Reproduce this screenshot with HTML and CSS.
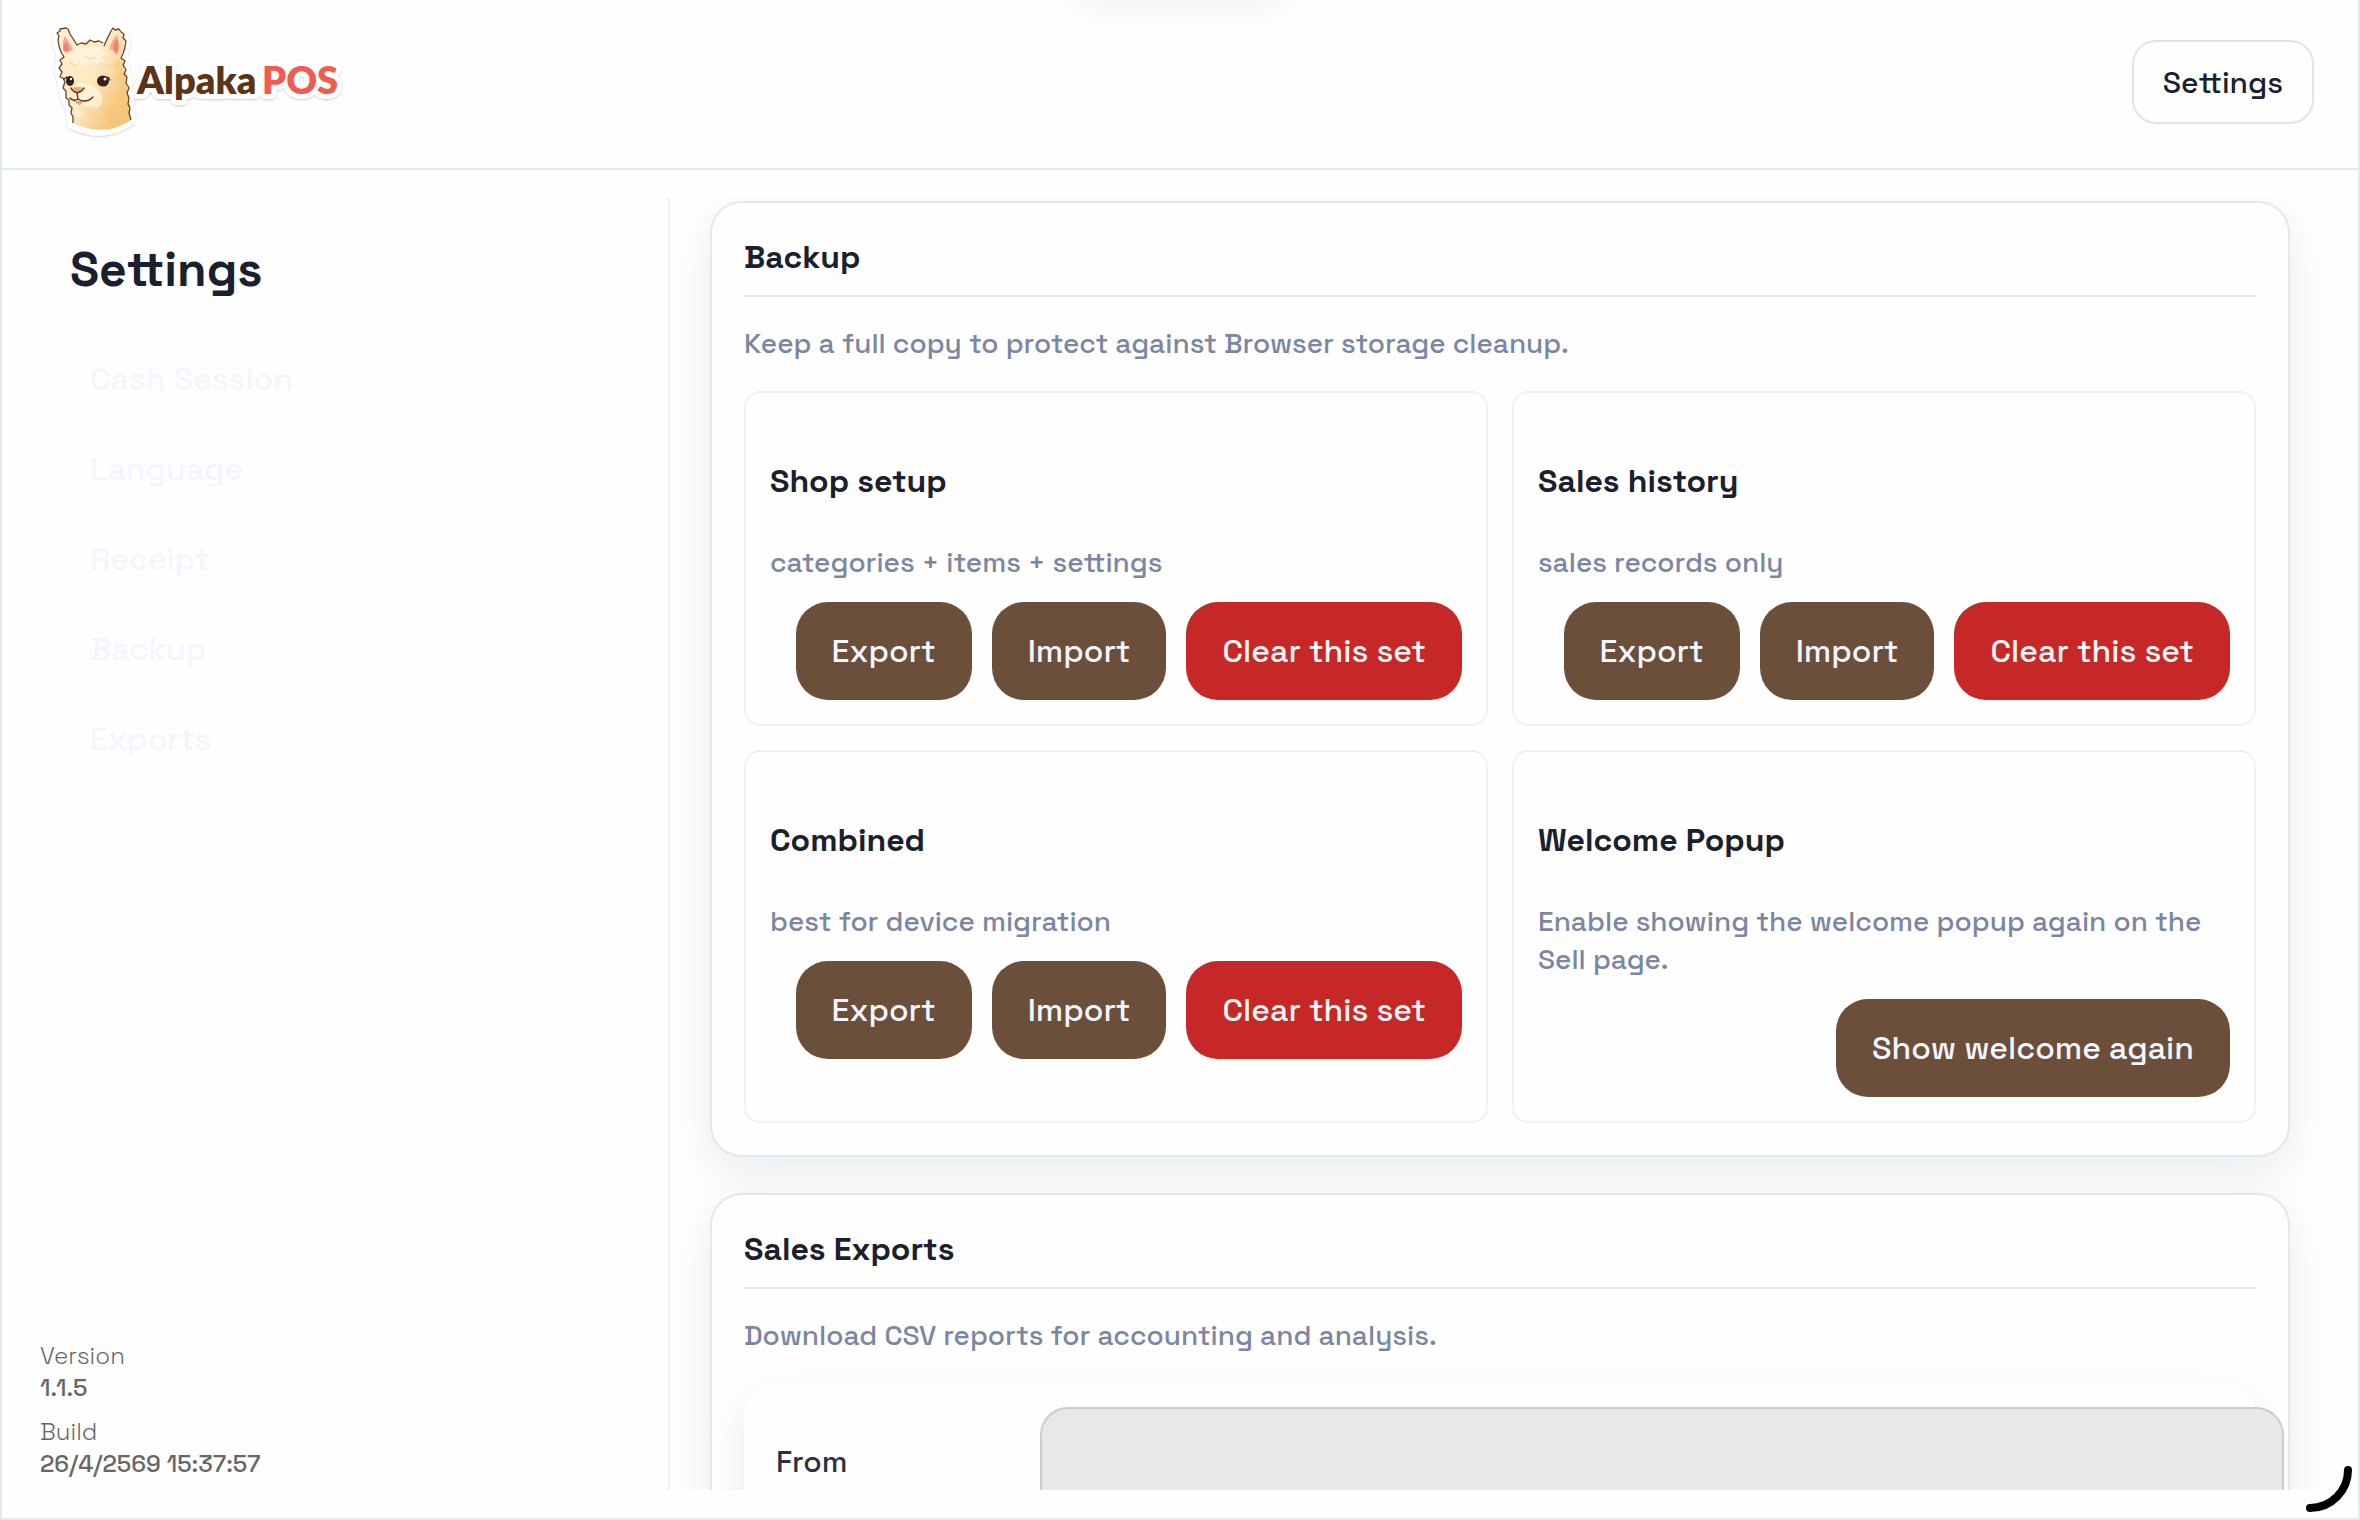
FILE: index.html
```html
<!DOCTYPE html>
<html lang="en">
<head>
  <meta charset="utf-8">
  <meta name="viewport" content="width=device-width, initial-scale=1">
  <title>Alpaka POS - Settings</title>
  <link rel="stylesheet" href="styles.css">
</head>
<body>
  <div class="app">
    <header class="topbar">
      <svg class="logo" viewBox="46 22 300 120" role="img" aria-label="Alpaka POS">
        <defs>
          <linearGradient id="fur" x1="0" y1="0" x2="1" y2="0.7">
            <stop offset="0" stop-color="#fff1d4"/>
            <stop offset="0.55" stop-color="#fde8c0"/>
            <stop offset="1" stop-color="#f3bd6c"/>
          </linearGradient>
          <filter id="sticker" x="-10%" y="-10%" width="120%" height="125%">
            <feDropShadow dx="0" dy="1" stdDeviation="1" flood-color="#000" flood-opacity="0.2"/>
          </filter>
        </defs>

        <!-- white sticker edge -->
        <g filter="url(#sticker)">
          <path fill="#fff" stroke="#fff" stroke-width="11" stroke-linejoin="round" d="M73 122 L71 108 L66 97 L63 82 L60 70 L62 56 L58 42 L59 31 L66 28 L71 34 L77 44 L90 40 L104 43 L109 32 L114 28 L123 32 L125 42 L122 56 L125 74 L128 94 L130 120 Q104 138 73 124 Z"/>
          <text class="logo-text logo-edge" x="137" y="94">Alpaka</text>
          <text class="logo-text logo-edge" x="262" y="94">POS</text>
        </g>

        <!-- head -->
        <path fill="url(#fur)" d="M73 123 L73 117 L71 111 L70 104 L66 98 L65 91 L63 86 L63 78 L60 73 L61 66 L60 61 L63 56 L60 50 L58 43 L59 37 L57 33 L60 29 L67 28 L70 34 L75 42 L80 45 L88 41 L96 41 L104 43 L109 34 L112 29 L119 29 L121 33 L125 36 L124 46 L122 54 L121 58 L125 63 L124 69 L127 76 L126 84 L128 90 L128 98 L130 106 L129 112 L131 120 Q104 138 73 123 Z"/>
        <path fill="#f6c980" opacity="0.6" d="M118 60 L124 76 L127 92 L129 112 L130 120 Q118 129 106 130 L112 122 L104 119 L112 113 L100 112 Q112 104 116 92 L121 84 L115 78 L120 70 L113 67 Z"/>
        <path fill="#fff6e4" opacity="0.7" d="M68 56 L78 48 L98 46 L108 54 L99 57 L106 62 L96 64 L90 62 L82 66 L74 64 Z M76 84 Q92 80 100 92 Q106 100 98 108 L84 106 L74 108 L84 114 L76 118 Q72 96 76 84 Z"/>
        <path fill="none" stroke="#f7d396" stroke-width="1" d="M69 62 l6 4 l5 -3 M84 56 l7 3 l5 -2 M100 62 l6 4 l7 -2 M107 96 l5 -2 l3 2 M106 104 l6 -2 l3 3 M88 115 l6 -2 l5 3 M96 123 l6 -2 l6 2 M112 88 l5 -2 l4 2"/>
        <path fill="none" stroke="#6b4426" stroke-width="1.3" stroke-linejoin="round" d="M73 123 L73 117 L71 113 L72 108 L69 105 L69 100 L66 98 L66 91 L63 88 L65 82 L63 78 L60 77 L62 72 L59 68 L62 64 L60 60 L64 57 L61 52 L59 46 L58 40 L59 36 L57 33 L60 31 L60 29 L66 28 L68 29 L70 34 L77 45 L81 43 L86 44 L90 40 L94 42 L99 41 L103 43 M104 46 L108 37 L111 31 L113 28 L115 30 L119 29 L121 32 L124 34 L123 38 L126 41 L125 47 L123 54 L121 58 L125 61 L123 65 L126 70 L124 74 L127 77 L126 83 L129 88 L127 93 L129 98 L128 104 L130 108 L129 113 L131 120"/>
        <path fill="#f7a693" d="M65 36 Q70 43 73 50 L69 51 L68 53 L64 52 Q61 44 65 36 Z M117 35 Q110 42 110 49 L114 51 L117 55 Q121 45 117 35 Z"/>
        <path fill="#ee8277" d="M66 42 Q69 45 69 51 L64 51 Q62 46 66 42 Z M117 39 Q112 44 114 51 L117 54 Q120 46 117 39 Z"/>

        <!-- face -->
        <ellipse cx="70" cy="81" rx="4" ry="5" fill="#33211c"/>
        <ellipse cx="103" cy="81" rx="6" ry="5.5" fill="#33211c"/>
        <circle cx="71" cy="79" r="1.2" fill="#fff"/>
        <circle cx="105" cy="79" r="1.5" fill="#fff"/>
        <path fill="none" stroke="#33211c" stroke-width="1.2" stroke-linecap="round" d="M64 79 L67 77 M108 77 L110 80"/>
        <path fill="#efa862" d="M72 88 Q78 86 84 88 L80 93 L76 93 Z M74 101 L84 101 L80 105 Q77 105 74 101 Z"/>
        <path fill="none" stroke="#5a3420" stroke-width="1.4" stroke-linecap="round" d="M71 88 Q72 91 77 93 L78 99 M77 93 Q83 91 84 88 M70 98 Q74 102 78 99 Q86 104 93 97"/>

        <text class="logo-text logo-name" x="137" y="94">Alpaka</text>
        <text class="logo-text logo-pos" x="262" y="94">POS</text>
      </svg>
      <button class="btn-outline" type="button">Settings</button>
    </header>

    <div class="layout">
      <aside class="sidebar">
        <h1 class="sidebar-title">Settings</h1>
        <nav class="sidebar-nav">
          <a href="#cash-session">Cash Session</a>
          <a href="#language">Language</a>
          <a href="#receipt">Receipt</a>
          <a href="#backup">Backup</a>
          <a href="#exports">Exports</a>
        </nav>
        <dl class="build-info">
          <div>
            <dt>Version</dt>
            <dd>1.1.5</dd>
          </div>
          <div>
            <dt>Build</dt>
            <dd>26/4/2569 15:37:57</dd>
          </div>
        </dl>
      </aside>

      <main class="content">
        <section class="panel" id="backup">
          <h2 class="panel-title">Backup</h2>
          <p class="muted">Keep a full copy to protect against Browser storage cleanup.</p>
          <div class="backup-grid">
            <article class="backup-card">
              <h3>Shop setup</h3>
              <p class="muted">categories + items + settings</p>
              <div class="actions">
                <button class="btn" type="button">Export</button>
                <button class="btn" type="button">Import</button>
                <button class="btn btn-danger" type="button">Clear this set</button>
              </div>
            </article>
            <article class="backup-card">
              <h3>Sales history</h3>
              <p class="muted">sales records only</p>
              <div class="actions">
                <button class="btn" type="button">Export</button>
                <button class="btn" type="button">Import</button>
                <button class="btn btn-danger" type="button">Clear this set</button>
              </div>
            </article>
            <article class="backup-card">
              <h3>Combined</h3>
              <p class="muted">best for device migration</p>
              <div class="actions">
                <button class="btn" type="button">Export</button>
                <button class="btn" type="button">Import</button>
                <button class="btn btn-danger" type="button">Clear this set</button>
              </div>
            </article>
            <article class="backup-card">
              <h3>Welcome Popup</h3>
              <p class="muted">Enable showing the welcome popup again on the Sell page.</p>
              <div class="actions">
                <button class="btn" type="button">Show welcome again</button>
              </div>
            </article>
          </div>
        </section>

        <section class="panel" id="exports">
          <h2 class="panel-title">Sales Exports</h2>
          <p class="muted">Download CSV reports for accounting and analysis.</p>
          <form class="export-form">
            <div class="field">
              <label for="export-from">From</label>
              <div class="field-control">
                <input id="export-from" type="text">
              </div>
            </div>
          </form>
        </section>
      </main>
    </div>
  </div>

  <!-- toast waits above the window, only its shadow shows -->
  <div class="toast" aria-hidden="true"></div>

  <svg class="corner-arc" viewBox="0 0 50 50" aria-hidden="true">
    <path d="M42 4 A38 38 0 0 1 4 42"/>
  </svg>
</body>
</html>
```

FILE: styles.css
```css
:root {
  --bg: #fefefe;
  --line: #e2e8f2;
  --line-soft: #f1f1f3;
  --text: #1a202e;
  --muted: #7b86a3;
  --brown: #6b4f3a;
  --red: #c62828;
}

* {
  margin: 0;
  padding: 0;
  box-sizing: border-box;
}

body {
  background: var(--bg);
  color: var(--text);
  font-family: "Space Grotesk", Inter, sans-serif;
  font-size: 28px;
  overflow: hidden;
}

button,
input {
  font: inherit;
}

.app {
  height: 100vh;
  display: flex;
  flex-direction: column;
  border: 2px solid var(--line);
  border-top: 0;
}

/* Top bar */
.topbar {
  display: flex;
  align-items: center;
  justify-content: space-between;
  padding: 22px 44px 26px;
  border-bottom: 2px solid var(--line);
}

.logo {
  display: block;
  width: 300px;
  height: 120px;
}

.logo-text {
  font-family: Lato, sans-serif;
  font-size: 38px;
  font-weight: 800;
}

.logo-edge {
  fill: #fff;
  stroke: #fff;
  stroke-width: 10px;
  stroke-linejoin: round;
}

.logo-name {
  fill: #5c3519;
}

.logo-pos {
  fill: #f15b50;
}

.btn-outline {
  height: 84px;
  padding: 0 29px;
  background: var(--bg);
  border: 2px solid #e4e4e4;
  border-radius: 24px;
  color: var(--text);
  font-size: 30px;
  font-weight: 500;
}

/* Layout */
.layout {
  flex: 1;
  min-height: 0;
  display: flex;
  padding: 28px;
}

.sidebar {
  width: 640px;
  flex-shrink: 0;
  display: flex;
  flex-direction: column;
  padding: 40px 10px 10px;
  border-right: 2px solid #eef0f3;
}

.sidebar-title {
  padding: 0 30px;
  font-size: 48px;
  line-height: 64px;
  font-weight: 700;
}

.sidebar-nav {
  display: flex;
  flex-direction: column;
  padding: 32px 50px;
}

.sidebar-nav a {
  color: #f4f6ff;
  font-size: 32px;
  font-weight: 500;
  line-height: 90px;
  text-decoration: none;
}

.build-info {
  display: flex;
  flex-direction: column;
  gap: 12px;
  margin-top: auto;
  color: #666;
  font-size: 24px;
  line-height: 32px;
}

.build-info dt {
  font-weight: 300;
}

.build-info dd {
  font-weight: 500;
}

.content {
  flex: 1;
  min-width: 0;
  overflow: hidden;
  padding: 3px 40px;
}

/* Panels */
.panel {
  margin-bottom: 36px;
  padding: 32px;
  background: var(--bg);
  border: 2px solid var(--line);
  border-radius: 32px;
  box-shadow: 0 16px 48px rgba(15, 23, 42, 0.08);
}

.panel-title {
  padding-bottom: 16px;
  border-bottom: 2px solid var(--line);
  font-size: 32px;
  line-height: 44px;
  font-weight: 600;
}

.muted {
  color: var(--muted);
  font-size: 28px;
  line-height: 38px;
  font-weight: 500;
}

.panel > .muted {
  margin: 27px 0 29px;
}

.backup-grid {
  display: grid;
  grid-template-columns: 1fr 1fr;
  gap: 24px;
}

.backup-card {
  padding: 24px;
  border: 2px solid var(--line-soft);
  border-radius: 16px;
}

.backup-card h3 {
  margin: 43px 0 41px;
  font-size: 32px;
  line-height: 42px;
  font-weight: 600;
}

.actions {
  display: flex;
  justify-content: flex-end;
  gap: 20px;
  margin-top: 21px;
}

.btn {
  height: 98px;
  padding: 0 36px;
  background: var(--brown);
  border: 0;
  border-radius: 32px;
  color: #f4f6ff;
  font-size: 32px;
  font-weight: 500;
}

.btn-danger {
  background: var(--red);
  color: #fff5f5;
}

/* Export form */
.export-form {
  padding: 24px 32px;
  border-radius: 32px;
  background: var(--bg);
  box-shadow: 0 16px 48px rgba(15, 23, 42, 0.08);
}

.field {
  display: grid;
  grid-template-columns: 264px 1fr;
  align-items: center;
}

.field label {
  color: #2a3142;
  font-size: 30px;
  font-weight: 500;
}

/* padding comes on top of the full width here */
.field input {
  display: block;
  box-sizing: content-box;
  width: 100%;
  height: 104px;
  padding: 0 28px;
  background: #e8e8e8;
  border: 2px solid #ccc;
  border-radius: 28px;
}

/* Overlays */
.toast {
  position: fixed;
  top: -96px;
  left: 50%;
  width: 220px;
  height: 80px;
  margin-left: -110px;
  border-radius: 24px;
  background: var(--bg);
  box-shadow: 0 16px 48px rgba(0, 0, 0, 0.07);
}

.corner-arc {
  position: fixed;
  right: 4px;
  bottom: 4px;
  width: 50px;
  height: 50px;
  fill: none;
  stroke: #000;
  stroke-width: 8;
  stroke-linecap: round;
}
```
